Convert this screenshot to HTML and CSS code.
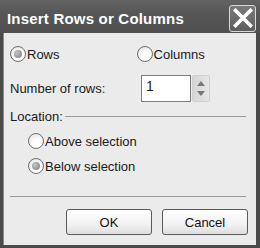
FILE: index.html
```html
<!DOCTYPE html>
<html lang="en">
<head>
    <meta charset="UTF-8">
    <title>Insert Rows or Columns</title>
    <link rel="stylesheet" href="styles.css">
</head>
<body>
    <div class="window">
        <div class="titlebar">
            <span class="title">Insert Rows or Columns</span>
            <span class="close">
                <svg width="20" height="20" viewBox="0 0 20 20">
                    <path d="M2.5 2.5 L17.5 17.5 M17.5 2.5 L2.5 17.5" stroke="#fff" stroke-width="3.6" stroke-linecap="square"/>
                </svg>
            </span>
        </div>
        <div class="content">
            <div class="row-top">
                <label class="radio"><span class="dot checked"></span>Rows</label>
                <label class="radio col2"><span class="dot"></span>Columns</label>
            </div>
            <div class="row-count">
                <span class="label">Number of rows:</span>
                <span class="spinbox">
                    <span class="input">1</span>
                    <span class="spin">
                        <svg width="8" height="5" viewBox="0 0 8 5"><path d="M0 5 L4 0 L8 5 Z" fill="#777"/></svg>
                        <svg width="8" height="5" viewBox="0 0 8 5"><path d="M0 0 L4 5 L8 0 Z" fill="#777"/></svg>
                    </span>
                </span>
            </div>
            <div class="group-head">
                <span>Location:</span>
                <span class="rule"></span>
            </div>
            <div class="group">
                <label class="radio"><span class="dot"></span>Above selection</label>
                <label class="radio"><span class="dot checked"></span>Below selection</label>
            </div>
            <div class="separator"></div>
            <div class="buttons">
                <button class="btn">OK</button>
                <button class="btn">Cancel</button>
            </div>
        </div>
    </div>
</body>
</html>
```

FILE: styles.css
```css
body {
    margin: 0;
    padding: 0;
    background-color: #ffffff;
    font-family: "Liberation Sans", Arial, sans-serif;
}

.window {
    width: 260px;
    height: 248px;
    box-sizing: border-box;
    background-color: #4a4a4a;
    padding: 0 4px 3px 3px;
    display: flex;
    flex-direction: column;
}

.titlebar {
    height: 33px;
    flex: none;
    display: flex;
    align-items: center;
    justify-content: space-between;
    background: linear-gradient(#636363, #575757 40%, #4f4f4f);
    margin: 0 -4px 0 -3px;
    padding: 0 4px 0 7px;
}

.title {
    color: #ffffff;
    font-weight: bold;
    font-size: 15px;
    letter-spacing: 0.2px;
    margin-top: 4px;
}

.close {
    width: 25px;
    height: 25px;
    border: 1px solid #d8d8d8;
    border-radius: 3px;
    background: linear-gradient(#7a7a7a, #5c5c5c);
    display: flex;
    align-items: center;
    justify-content: center;
    margin-top: 3px;
}

.content {
    flex: 1;
    background-color: #ebebeb;
    border-left: 1px solid #8a8a8a;
    padding: 11px 10px 10px 6px;
    font-size: 13px;
    color: #1a1a1a;
    display: flex;
    flex-direction: column;
}

.row-top {
    display: flex;
    height: 20px;
    align-items: center;
}

.radio {
    display: flex;
    align-items: center;
    height: 20px;
}

.col2 {
    margin-left: 77px;
}

.dot {
    width: 14px;
    height: 14px;
    border: 1px solid #6e6e6e;
    border-radius: 50%;
    background: radial-gradient(circle at 60% 65%, #ffffff 30%, #dcdcdc);
    margin-right: 1px;
    display: flex;
    align-items: center;
    justify-content: center;
}

.dot.checked::after {
    content: "";
    width: 8px;
    height: 8px;
    border-radius: 50%;
    background: radial-gradient(circle at 35% 35%, #c4c4c4, #7c7c7c);
}

.row-count {
    display: flex;
    align-items: center;
    margin-top: 11px;
}

.label {
    width: 131px;
}

.spinbox {
    display: flex;
    align-items: stretch;
}

.input {
    width: 50px;
    height: 27px;
    border: 1px solid #7f7f7f;
    background-color: #ffffff;
    font-size: 14px;
    padding-left: 4px;
    box-sizing: border-box;
    line-height: 20px;
}

.spin {
    width: 18px;
    margin-left: 1px;
    border-radius: 2px;
    background: linear-gradient(90deg, #d6d6d6, #e6e6e6);
    border: 1px solid #d0d0d0;
    display: flex;
    flex-direction: column;
    align-items: center;
    justify-content: space-around;
    padding: 3px 0;
    box-sizing: border-box;
}

.group-head {
    display: flex;
    align-items: center;
    margin-top: 6px;
    height: 16px;
}

.rule {
    flex: 1;
    border-top: 1px solid #9a9a9a;
    margin-left: 2px;
    margin-top: 1px;
}

.group {
    display: flex;
    flex-direction: column;
    gap: 5px;
    padding-left: 18px;
    margin-top: 7px;
}

.separator {
    border-top: 1px solid #9a9a9a;
    margin-top: 20px;
}

.buttons {
    display: flex;
    justify-content: flex-end;
    gap: 10px;
    margin-top: 12px;
    margin-right: -2px;
}

.btn {
    width: 86px;
    height: 26px;
    border: 1px solid #5a5a5a;
    border-radius: 3px;
    background: linear-gradient(#ffffff, #f2f2f2 60%, #dedede);
    font-family: "Liberation Sans", Arial, sans-serif;
    font-size: 13px;
    color: #111;
    padding: 0;
}
```
